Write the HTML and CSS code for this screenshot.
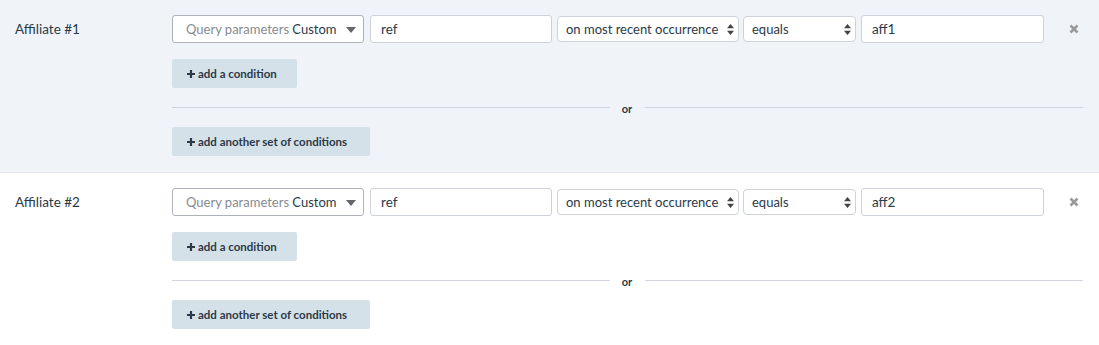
FILE: index.html
```html
<!DOCTYPE html>
<html lang="en">
<head>
    <meta charset="UTF-8">
    <title>Affiliates</title>
    <link rel="stylesheet" href="styles.css">
</head>
<body>

<div class="affiliate shaded">
    <div class="label">Affiliate #1</div>
    <div class="rules">
        <div class="row">
            <div class="field picker">
                <span class="muted">Query parameters</span>&nbsp;Custom
                <svg class="caret" width="10" height="6" viewBox="0 0 10 6"><path d="M0 0h10L5 6z" fill="#666"/></svg>
            </div>
            <div class="field text w-ref">ref</div>
            <div class="field native w-when">on most recent occurrence
                <svg class="updown" width="7" height="11" viewBox="0 0 7 11"><path d="M3.5 0L7 4.2H0z M3.5 11L0 6.8h7z" fill="#444"/></svg>
            </div>
            <div class="field native w-op">equals
                <svg class="updown" width="7" height="11" viewBox="0 0 7 11"><path d="M3.5 0L7 4.2H0z M3.5 11L0 6.8h7z" fill="#444"/></svg>
            </div>
            <div class="field text w-val">aff1</div>
            <svg class="remove" width="10" height="10" viewBox="0 0 10 10"><path d="M1.5 1.5l7 7M8.5 1.5l-7 7" stroke="#9a9a9a" stroke-width="2.6"/></svg>
        </div>
        <button class="add small"><svg class="plus" width="8" height="8" viewBox="0 0 8 8"><path d="M4 0v8M0 4h8" stroke="#2b3a48" stroke-width="2.2"/></svg>add a condition</button>
        <div class="divider"><span>or</span></div>
        <button class="add"><svg class="plus" width="8" height="8" viewBox="0 0 8 8"><path d="M4 0v8M0 4h8" stroke="#2b3a48" stroke-width="2.2"/></svg>add another set of conditions</button>
    </div>
</div>

<div class="affiliate">
    <div class="label">Affiliate #2</div>
    <div class="rules">
        <div class="row">
            <div class="field picker">
                <span class="muted">Query parameters</span>&nbsp;Custom
                <svg class="caret" width="10" height="6" viewBox="0 0 10 6"><path d="M0 0h10L5 6z" fill="#666"/></svg>
            </div>
            <div class="field text w-ref">ref</div>
            <div class="field native w-when">on most recent occurrence
                <svg class="updown" width="7" height="11" viewBox="0 0 7 11"><path d="M3.5 0L7 4.2H0z M3.5 11L0 6.8h7z" fill="#444"/></svg>
            </div>
            <div class="field native w-op">equals
                <svg class="updown" width="7" height="11" viewBox="0 0 7 11"><path d="M3.5 0L7 4.2H0z M3.5 11L0 6.8h7z" fill="#444"/></svg>
            </div>
            <div class="field text w-val">aff2</div>
            <svg class="remove" width="10" height="10" viewBox="0 0 10 10"><path d="M1.5 1.5l7 7M8.5 1.5l-7 7" stroke="#9a9a9a" stroke-width="2.6"/></svg>
        </div>
        <button class="add small"><svg class="plus" width="8" height="8" viewBox="0 0 8 8"><path d="M4 0v8M0 4h8" stroke="#2b3a48" stroke-width="2.2"/></svg>add a condition</button>
        <div class="divider"><span>or</span></div>
        <button class="add"><svg class="plus" width="8" height="8" viewBox="0 0 8 8"><path d="M4 0v8M0 4h8" stroke="#2b3a48" stroke-width="2.2"/></svg>add another set of conditions</button>
    </div>
</div>

</body>
</html>
```

FILE: styles.css
```css
/* General Styling */
body {
    font-family: 'Lato', 'Noto Sans', sans-serif;
    margin: 0;
    padding: 0;
    background-color: #ffffff;
    color: #2b3a48;
    width: 1099px;
}

.affiliate {
    display: flex;
    padding: 15px 0 16px 15px;
    height: 142px;
}

.affiliate.shaded {
    background-color: #f0f3f8;
    border-bottom: 1px solid #e2e7ee;
    padding-bottom: 15px;
}

.label {
    width: 157px;
    font-size: 13.5px;
    line-height: 28px;
    color: #2b3a48;
}

.rules {
    width: 912px;
    display: flex;
    flex-direction: column;
    align-items: flex-start;
}

.row {
    display: flex;
    align-items: center;
    height: 28px;
    width: 100%;
}

.field {
    box-sizing: border-box;
    height: 28px;
    border: 1px solid #cdd3d9;
    border-radius: 3px;
    background: white;
    font-size: 13px;
    color: #2b3a48;
    display: flex;
    align-items: center;
    position: relative;
    white-space: nowrap;
}

.picker {
    width: 192px;
    border-color: #adb3b9;
    padding-left: 13px;
    margin-right: 6px;
}

.muted {
    color: #858b91;
}

.caret {
    position: absolute;
    right: 7px;
    top: 11px;
}

.text {
    padding-left: 10px;
    font-size: 13.5px;
}

.w-ref {
    width: 182px;
    margin-right: 5px;
}

.native {
    height: 26px;
    border-radius: 4px;
    padding-left: 8px;
}

.w-when {
    width: 182px;
    margin-right: 4px;
}

.w-op {
    width: 113px;
    margin-right: 5px;
}

.updown {
    position: absolute;
    right: 4px;
    top: 7px;
}

.w-val {
    width: 183px;
}

.remove {
    margin-left: 25px;
}

button.add {
    font-family: inherit;
    background-color: #d5e1e9;
    color: #2b3a48;
    border: none;
    border-radius: 2px;
    height: 29px;
    width: 198px;
    font-size: 11.5px;
    font-weight: bold;
    padding: 0 0 0 15px;
    display: flex;
    align-items: center;
    cursor: pointer;
}

.plus {
    margin-right: 3px;
}

button.add.small {
    width: 125px;
    margin-top: 16px;
}

.divider {
    width: 911px;
    display: flex;
    align-items: center;
    margin: 12px 0 13px;
    font-size: 11px;
    font-weight: bold;
    height: 14px;
}

.divider::before,
.divider::after {
    content: "";
    flex: 1;
    border-top: 1px solid #cfd5db;
}

.divider span {
    padding: 2px 13px 0 12px;
}
```
